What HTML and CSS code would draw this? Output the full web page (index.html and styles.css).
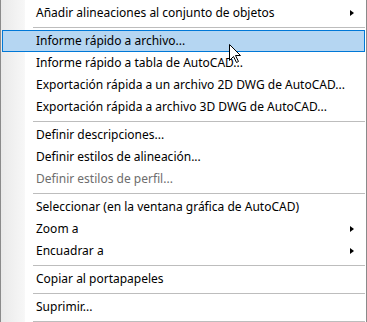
FILE: index.html
```html
<!DOCTYPE html>
<html lang="es">
<head>
    <meta charset="UTF-8">
    <meta name="viewport" content="width=device-width, initial-scale=1.0">
    <title>Menú contextual</title>
    <link rel="stylesheet" href="styles.css">
</head>
<body>
    <ul class="menu">
        <li class="item has-sub">Añadir alineaciones al conjunto de objetos<span class="arrow"></span></li>
        <li class="sep"></li>
        <li class="item hover">Informe rápido a archivo...</li>
        <li class="item">Informe rápido a tabla de AutoCAD...</li>
        <li class="item">Exportación rápida a un archivo 2D DWG de AutoCAD...</li>
        <li class="item">Exportación rápida a archivo 3D DWG de AutoCAD...</li>
        <li class="sep"></li>
        <li class="item">Definir descripciones...</li>
        <li class="item">Definir estilos de alineación...</li>
        <li class="item disabled">Definir estilos de perfil...</li>
        <li class="sep"></li>
        <li class="item">Seleccionar (en la ventana gráfica de AutoCAD)</li>
        <li class="item has-sub">Zoom a<span class="arrow"></span></li>
        <li class="item has-sub">Encuadrar a<span class="arrow"></span></li>
        <li class="sep"></li>
        <li class="item">Copiar al portapapeles</li>
        <li class="sep"></li>
        <li class="item">Suprimir...</li>
        <li class="sep"></li>
    </ul>

    <!-- mouse pointer over the hovered item -->
    <svg class="cursor" width="13" height="20" viewBox="0 0 13 20">
        <polygon points="0.5,0.5 0.5,16.5 4.5,12.5 7.5,18.5 9.5,17.5 6.5,11.5 11.5,11.5" fill="#fff" stroke="#000" stroke-width="1"/>
    </svg>
</body>
</html>
```

FILE: styles.css
```css
/* Basic Reset */
* {
    margin: 0;
    padding: 0;
    box-sizing: border-box;
}

body {
    font-family: "Segoe UI", "Noto Sans", Arial, sans-serif;
    font-size: 12px;
    color: #000;
    background: #fff;
    position: relative;
}

/* Menu */
.menu {
    list-style: none;
    width: 367px;
    height: 322px;
    overflow: hidden;
    padding: 2px 1px 0 1px;
    border-left: 1px solid #8a8a8a;
    border-right: 1px solid #8a8a8a;
    background: linear-gradient(to right, #e9e9e9 0, #f6f6f6 22px, #f8f8f8 24px, #fff 24px);
}

.item {
    display: flex;
    align-items: center;
    height: 22px;
    padding: 0 10px 1px 33px;
    border: 1px solid transparent;
    white-space: nowrap;
}

.item.hover {
    background-color: #b5d6f2;
    border-color: #0078d7;
}

.item.disabled {
    color: #6d6d6d;
}

.arrow {
    margin-left: auto;
    width: 0;
    height: 0;
    border-left: 4px solid #000;
    border-top: 3.5px solid transparent;
    border-bottom: 3.5px solid transparent;
}

.sep {
    height: 1px;
    margin: 3px 0 2px 31px;
    background-color: #bdbdbd;
}

/* Pointer */
.cursor {
    position: absolute;
    left: 229px;
    top: 44px;
}
```
